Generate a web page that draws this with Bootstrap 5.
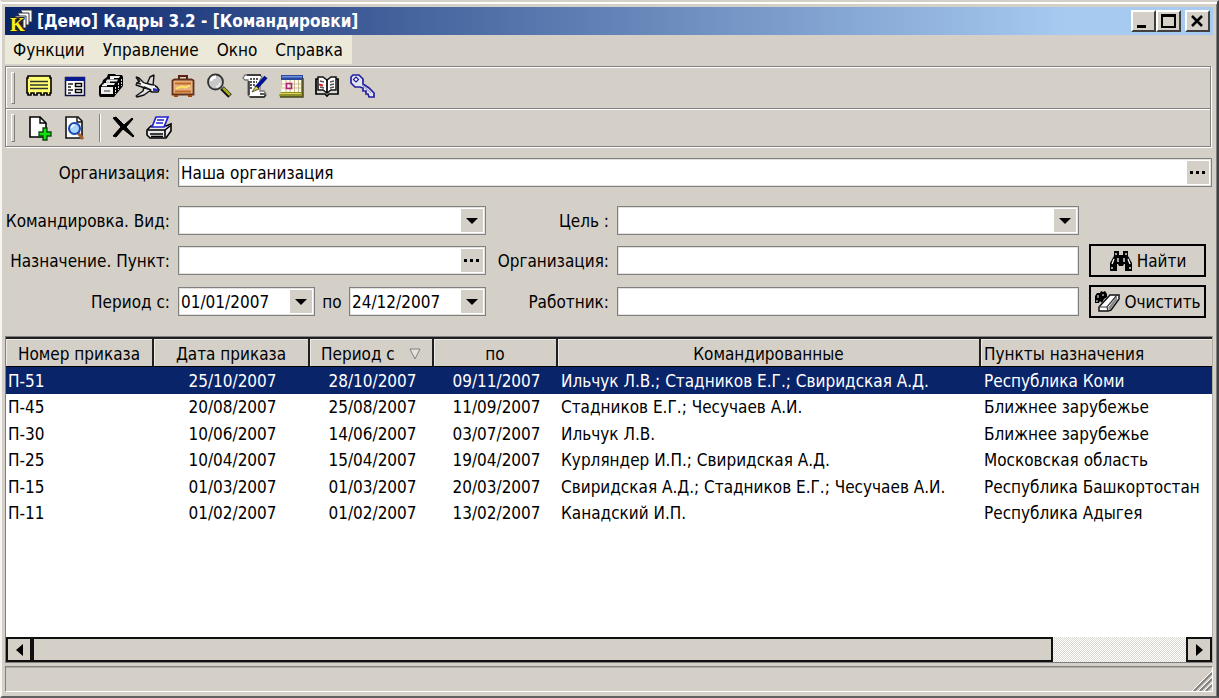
<!DOCTYPE html>
<html lang="ru">
<head>
<meta charset="utf-8">
<meta name="viewport" content="width=device-width, initial-scale=1">
<title>Кадры 3.2 - Командировки</title>
<link href="https://cdn.jsdelivr.net/npm/bootstrap@5.3.0/dist/css/bootstrap.min.css" rel="stylesheet">
<style>
:root { --face: #d4d0c8; --shade: #808080; --navy: #0a246a; }
body { background: var(--face); color: #000; font-family: "DejaVu Sans Condensed", "Noto Sans", sans-serif; font-size: 17px; line-height: 24px; }
button, input, select { font: inherit; color: inherit; border-radius: 0; }
button { background: var(--face); border: 0; padding: 0; }
svg { display: block; flex: none; }
.win { border: 2px solid; border-color: var(--face) #404040 #606060 #f6f5f2; box-shadow: inset 0 2px #fff, inset -1px 0 var(--shade); padding: 5px 4px 4px 3px; }
.titlebar { height: 28px; background: linear-gradient(90deg, var(--navy), #a6caf0 88%); padding: 0 3px 0 4px; }
.titlebar h1 { font-size: 17px; line-height: 24px; font-weight: 700; color: #fff; }
.winbtn { width: 25px; height: 22px; border: 2px solid; border-color: #fff #404040 #404040 #fff; }
.menubar { height: 29px; background: #ece9d8; padding: 0 9px 0 8px; gap: 18px; }
.menubar a { color: #000; text-decoration: none; }
.bars { border: 1px solid var(--shade); box-shadow: 1px 1px #fff, inset 1px 1px #fff; margin: 2px 2px 0 0; }
.toolrow { padding-left: 5px; }
.toolrow.first { height: 42px; border-bottom: 1px solid var(--shade); }
.toolrow.first .tool { margin-bottom: 4px; }
.toolrow.second { height: 37px; box-shadow: inset 0 1px #fff; }
.grip { width: 4px; margin: 5px 6px 4px 0; border: 1px solid; border-color: #fff var(--shade) var(--shade) #fff; align-self: stretch; }
.split { width: 2px; height: 28px; background: #fff; border-left: 1px solid var(--shade); margin: 0 4px 0 6px; }
.tool { width: 36px; height: 32px; display: flex; align-items: center; justify-content: center; }
.filters { display: grid; grid-template-columns: 165px 2fr 115px 3fr 125px; column-gap: 8px; row-gap: 8px; align-items: center; margin-right: 1px; padding: 11px 0 18px; grid-template-rows: 29px 41px 33px 33px; }
.filters > label { text-align: right; white-space: nowrap; }
.orgbox { grid-column: 2 / -1; }
.gaprow { margin-top: 10px; }
.fbox { height: 29px; min-width: 0; background: #fff; border: 1px solid var(--shade); box-shadow: inset 0 0 0 1px #e4e2de; padding: 2px; }
.fbox input { border: 0; background: none; flex: 1; min-width: 0; width: 100%; padding: 0; height: 23px; outline: 0; }
.fbox button { width: 22px; flex: none; display: flex; align-items: center; justify-content: center; }
.datebox { flex: 0 0 137px; }
.combo { appearance: none; width: 100%; height: 29px; border: 1px solid var(--shade); padding: 0 26px 0 2px; box-shadow: inset 0 0 0 1px #e4e2de;
  background: #fff url("data:image/svg+xml,%3Csvg xmlns='http://www.w3.org/2000/svg' width='22' height='23'%3E%3Cpath fill='%23d4d0c8' d='M0 0h22v23H0z'/%3E%3Cpath d='M5 9h12l-6 6z'/%3E%3C/svg%3E") no-repeat right 2px center; }
.cmd { height: 33px; margin: 0 6px 0 2px; border: 2px solid #000; display: flex; align-items: center; justify-content: center; gap: 4px; white-space: nowrap; }
.sheet { background: #fff; border: 1px solid var(--shade); border-right-color: #b0aca4; flex: 1; min-width: 0; }
.orders { table-layout: fixed; width: 100%; border-collapse: separate; border-spacing: 0; }
.orders th { background: var(--face); font-weight: 400; height: 30px; padding: 2px 3px 0; border-top: 2px solid #202020; border-bottom: 1px solid #000; border-right: 2px solid #202020; box-shadow: inset 1px 1px #eceae6; text-align: center; white-space: nowrap; }
.orders th:last-child { border-right: 0; text-align: left; }
.orders td { height: 26px; padding: 0 2px 0 3px; white-space: nowrap; overflow: hidden; }
.orders tr:nth-child(odd) td { height: 27px; }
.orders .dt { text-align: center; }
.orders tr.sel td { background: var(--navy); color: #fff; }
.orders td:first-child { padding-left: 2px; }
.hbar { height: 25px; }
.hbar button, .thumb { border: 2px solid #101010; background: var(--face); height: 25px; }
.hbar button { width: 26px; display: flex; align-items: center; justify-content: center; }
.track { background: repeating-conic-gradient(#fff 0 25%, #dcd9d3 0 50%) 0 0 / 2px 2px; }
.statusbar { height: 26px; margin-top: 3px; border: 1px solid; border-color: var(--shade) #fff #fff var(--shade); box-shadow: inset 0 1px #b0aca4; }
</style>
</head>
<body>
<div class="win d-flex flex-column min-vh-100">
  <header class="titlebar d-flex align-items-center">
    <svg width="24" height="26" viewBox="0 0 24 26"><g fill="#fff" stroke="#333"><path d="M12 2h11v12h-4"/><path d="M9 5h11v12h-4"/><path d="M6 8h11v12H8z"/><path d="M3 10h11v12H3z" fill="#222"/></g><text x="1" y="23" font-family="Liberation Serif" font-weight="700" font-size="19" fill="#ffee20" stroke="#222" stroke-width="2" paint-order="stroke">K</text></svg>
    <h1 class="mb-0 ms-1 flex-grow-1">[Демо] Кадры 3.2 - [Командировки]</h1>
    <button class="winbtn" aria-label="Свернуть"><svg width="21" height="18"><path d="M4 13h9v3H4z"/></svg></button>
    <button class="winbtn" aria-label="Развернуть"><svg width="21" height="18"><path d="M4 3h13v12H4z" fill="none" stroke="#000" stroke-width="2"/><path d="M3 2h15v3H3z"/></svg></button>
    <button class="winbtn ms-1" aria-label="Закрыть"><svg width="21" height="18"><path d="M5 4l10 10M15 4L5 14" stroke="#000" stroke-width="2.5"/></svg></button>
  </header>
  <nav class="menubar d-flex align-items-center align-self-start">
    <a href="#">Функции</a><a href="#">Управление</a><a href="#">Окно</a><a href="#">Справка</a>
  </nav>
  <div class="bars">
    <div class="toolrow first d-flex align-items-center">
      <span class="grip"></span>
      <button class="tool" aria-label="Карточка"><svg width="26" height="26" viewBox="0 0 26 26"><path d="M2 3h22v2h1v15h-1v2h-3v-2h-3v2h-3v-2h-4v2H8v-2H5v2H2v-2H1V5h1z" fill="#ffff70" stroke="#000" stroke-width="1.600"/><path d="M4 8.500h18M4 12h18M4 15.500h18" stroke="#333" stroke-width="1.500"/></svg></button>
      <button class="tool" aria-label="Форма"><svg width="26" height="26" viewBox="0 0 26 26"><path d="M3.500 4.500h19v18h-19z" fill="#fff" stroke="#101040" stroke-width="1.500"/><path d="M3 4h20v4H3z" fill="#0a1a90"/><path d="M6 11h5M6 14h3M6 17h5M6 20h3" stroke="#222" stroke-width="1.500"/><path d="M13.500 10.500h6v3h-6zM13.500 16.500h6v3h-6z" fill="#fff" stroke="#000" stroke-width="1.500"/></svg></button>
      <button class="tool" aria-label="Картотека"><svg width="26" height="26" viewBox="0 0 26 26"><path d="M1 13L4 10l1-3 4-3 1-3h7l1 1h6l1 2v9l-9 11H2L1 22z" fill="#000"/><path d="M3 14h12v7H3zM6 10h11l-1 2H5zM9 6.500h11l-1 2H8zM12 3h10l-1 2h-9z" fill="#eee"/><path d="M17.500 14v7M20.500 10v7M23.500 6v7" stroke="#ddd" stroke-dasharray="2 1"/><path d="M4 12.500h5M8 9h4M12 5.500h4" stroke="#fff" stroke-width="1.500"/><path d="M6 18h6" stroke="#333"/></svg></button>
      <button class="tool" aria-label="Командировки"><svg width="26" height="26" viewBox="0 0 26 26"><g stroke="#111" stroke-width="1.400" stroke-linejoin="bevel"><path d="M13 11l3-7 4-2-1 11z" fill="#ddd"/><path d="M2 4l3 1 5 5 9 2 4 2 2 3-1 2h-6L8 14l-6-2 1-2 2-1z" fill="#f2f2f2"/><path d="M10 14l7 3-7 5-7 2-1-1 7-5z" fill="#e4e4e4"/></g><path d="M2 10l5 1M4 5l2 4M11 15l3 1M19 12l3 1" stroke="#222" stroke-width="1.500"/><path d="M19 15l5 1v2h-5z" fill="#2c2cc8"/><path d="M9 11l6 2M18 13.500h3" stroke="#fff" stroke-width="1.500"/></svg></button>
      <button class="tool" aria-label="Отпуска"><svg width="26" height="26" viewBox="0 0 26 26"><path d="M9 6V3h8v3" fill="none" stroke="#5a2010" stroke-width="2"/><path d="M2.500 7.500l2-1h17l2 1v14h-21z" fill="#e6b080" stroke="#64301a" stroke-width="1.800"/><path d="M5 10.500h16M5 18.500h16" stroke="#c06a28" stroke-width="1.800"/><path d="M6 15.500l6-2 3 1 5-2" stroke="#ffe860" stroke-width="1.800" fill="none"/><path d="M4 22h4v2H4zM18 22h4v2h-4z" fill="#a04808"/></svg></button>
      <button class="tool" aria-label="Поиск"><svg width="26" height="26" viewBox="0 0 26 26"><path d="M16 15l8 8" stroke="#111" stroke-width="5"/><path d="M17 15l7 7" stroke="#a8ac20" stroke-width="2.500"/><circle cx="9.500" cy="9" r="7.500" fill="#c8c8c8" stroke="#333" stroke-width="1.800"/><path d="M5 8a5 5 0 015-4" stroke="#fff" stroke-width="3" fill="none"/><path d="M14 10a5 5 0 01-4 4" stroke="#eee" stroke-width="1.500" fill="none"/></svg></button>
      <button class="tool" aria-label="Приказы"><svg width="26" height="26" viewBox="0 0 26 26"><path d="M3 2h15l2 2-2 3v11h4l2 3-2 3H8l-2-2V7H3L1 5z" fill="#fff" stroke="#777" stroke-width="1.300"/><path d="M5 2h14M8 24h14l2-2M7 8v14M18 21h5" stroke="#222" stroke-width="1.500" fill="none"/><path d="M8 6h8M8 9h7M8 12h6M8 15h3" stroke="#222" stroke-width="1.500" stroke-dasharray="2 1"/><path d="M24 4l-10 11" stroke="#001090" stroke-width="4"/><path d="M14 13l3 3-7 3z" fill="#ded030" stroke="#333" stroke-width=".8"/></svg></button>
      <button class="tool" aria-label="Календарь"><svg width="26" height="26" viewBox="0 0 26 26"><path d="M4 4h20l1 2v18H2l-1-2 2-3z" fill="#90902c"/><path d="M4 7h19v12H3z" fill="#fffbe8"/><path d="M3 2h22v5H3z" fill="#2848a0"/><path d="M4 3h20v1.500H4z" fill="#7090d8"/><path d="M4 11h19M4 15h19M8 7v12M12 7v12M16.500 7v12M20.500 7v12" stroke="#c8b890"/><path d="M8.500 10.500h5v5h-5z" fill="none" stroke="#b0207c" stroke-width="1.600"/><path d="M2 24h23V5" fill="none" stroke="#4a4a20" stroke-width="1.500"/><path d="M2 20.500h21" stroke="#dcd850"/></svg></button>
      <button class="tool" aria-label="Справочник"><svg width="26" height="26" viewBox="0 0 26 26"><path d="M4 6H2v15h9l2 2 2-2h9V6h-2" fill="#ddd" stroke="#000" stroke-width="1.700"/><path d="M4 4h5l4 3 4-3h5v13h-5l-4 3-4-3H4z" fill="#fff" stroke="#111" stroke-width="1.500"/><path d="M13 7v13" stroke="#000" stroke-width="1.700"/><path d="M6 8l4 1M6 14l4 1M16 9l4-1M16 12l4-1M16 15l4-1" stroke="#555" stroke-width="1.300"/><path d="M5 11.500l4 1" stroke="#e02020" stroke-width="2"/></svg></button>
      <button class="tool" aria-label="Пароль"><svg width="26" height="26" viewBox="0 0 26 26"><path d="M3 2h6l4 4v5l6 4 5 5v4h-5l-1-3h-2v-3h-3v-3l-3-1H5L1 10V4z" fill="#e4e4f0" stroke="#2020a0" stroke-width="1.700"/><path d="M6 4l2.500 2.500L6 9 3.500 6.500z" fill="#fff" stroke="#2020a0" stroke-width="1.200"/><path d="M12 12l9 8" stroke="#9090c0"/></svg></button>
    </div>
    <div class="toolrow second d-flex align-items-center">
      <span class="grip"></span>
      <button class="tool" aria-label="Добавить"><svg width="26" height="26" viewBox="0 0 26 26"><path d="M4 2h10l6 6v14H4z" fill="#fff" stroke="#000" stroke-width="1.600"/><path d="M14 2v6h6" fill="none" stroke="#000" stroke-width="1.400"/><path d="M17 13h4v4h4v4h-4v4h-4v-4h-4v-4h4z" fill="#10e010" stroke="#084808" stroke-width="1.300"/></svg></button>
      <button class="tool" aria-label="Просмотр"><svg width="26" height="26" viewBox="0 0 26 26"><path d="M4 2h12l4 4v17H4z" fill="#fff" stroke="#111" stroke-width="1.600"/><path d="M15 2v5h5" fill="none" stroke="#111" stroke-width="1.400"/><path d="M16 18l5 6" stroke="#a86030" stroke-width="3"/><circle cx="12.500" cy="13.500" r="5.500" fill="#a8d4ff" stroke="#1848b0" stroke-width="2"/><path d="M9.500 13a3 3 0 013-3" stroke="#fff" stroke-width="1.500" fill="none"/></svg></button>
      <span class="split"></span>
      <button class="tool" aria-label="Удалить"><svg width="26" height="26" viewBox="0 0 26 26"><path d="M3 3l3-1 8 8 8-7 1 1-7 8 8 9-1 1-10-8-7 8-3-1 8-9z" stroke="#000"/></svg></button>
      <button class="tool" aria-label="Печать"><svg width="26" height="26" viewBox="0 0 26 26"><path d="M5 11h15l5-2v7l-5 7H4l-3-3v-5z" fill="#e8e8e8" stroke="#000" stroke-width="1.600"/><path d="M10 2h12l-4 10H6z" fill="#fff" stroke="#2020d0" stroke-width="1.700"/><path d="M11 5h7M10 8h7" stroke="#2020d0" stroke-width="1.500"/><path d="M2 15h17l5-4M19 15v7M4 19h13M5 21.500h12" fill="none" stroke="#000" stroke-width="1.600"/></svg></button>
    </div>
  </div>

  <form class="filters">
    <label for="org">Организация:</label>
    <div class="fbox orgbox d-flex"><input id="org" value="Наша организация"><button type="button" aria-label="Выбрать организацию"><svg width="16" height="4"><path d="M0 0h3v3H0zM6 0h3v3H6zM12 0h3v3h-3z"/></svg></button></div>

    <label for="kind" class="gaprow">Командировка. Вид:</label>
    <select id="kind" class="combo gaprow"><option></option></select>
    <label for="goal" class="gaprow">Цель :</label>
    <select id="goal" class="combo gaprow"><option></option></select>
    <span></span>

    <label for="place">Назначение. Пункт:</label>
    <div class="fbox d-flex"><input id="place"><button type="button" aria-label="Выбрать пункт"><svg width="16" height="4"><path d="M0 0h3v3H0zM6 0h3v3H6zM12 0h3v3h-3z"/></svg></button></div>
    <label for="dest">Организация:</label>
    <div class="fbox d-flex"><input id="dest"></div>
    <button type="button" class="cmd"><svg width="24" height="22" viewBox="0 0 24 22"><path d="M5 1h5v4h4V1h5v5l4 7v8h-7v-7h-1l-1 2h-4l-1-2H8v7H1v-8l4-7z"/><path d="M7 3v2M17 3v2M5 9l-2 5M9 8v4M15 8v4M19 9l2 5M3 17v2M21 17v2" stroke="#fff" stroke-width="1.300"/></svg>Найти</button>

    <label for="from">Период с:</label>
    <div class="d-flex align-items-center justify-content-between">
      <div class="fbox datebox d-flex"><input id="from" value="01/01/2007"><button type="button" aria-label="Календарь начала"><svg width="12" height="6"><path d="M0 0h12L6 6z"/></svg></button></div>
      <label for="to">по</label>
      <div class="fbox datebox d-flex"><input id="to" value="24/12/2007"><button type="button" aria-label="Календарь конца"><svg width="12" height="6"><path d="M0 0h12L6 6z"/></svg></button></div>
    </div>
    <label for="worker">Работник:</label>
    <div class="fbox d-flex"><input id="worker"></div>
    <button type="button" class="cmd"><svg width="26" height="22" viewBox="0 0 26 22"><path d="M1 5l2-3h3l1-2 2 1 2-1 2 3v3l-3 2-2 4-2-2-1 2H1z"/><path d="M4 4v3M9 3v2M3 9v2" stroke="#fff"/><path d="M16 4h9v4l-8 11-3 1H5v-4z" fill="#fff" stroke="#111" stroke-width="1.500"/><path d="M5 16h8l10-12M13 16l1 4" fill="none" stroke="#333" stroke-width="1.200"/><path d="M14 17l9-12v4l-7 10z" fill="#888"/></svg>Очистить</button>
  </form>

  <main class="sheet d-flex flex-column">
    <div class="flex-grow-1">
      <table class="orders">
        <colgroup><col style="width:148px"><col style="width:156px"><col style="width:124px"><col style="width:124px"><col style="width:423px"><col></colgroup>
        <thead><tr><th>Номер приказа</th><th>Дата приказа</th><th><span class="d-flex justify-content-between align-items-center px-2">Период с <svg width="12" height="12"><path d="M1 1h10L6 11z" fill="#e4e2de" stroke="#808080"/></svg></span></th><th>по</th><th>Командированные</th><th>Пункты назначения</th></tr></thead>
        <tbody>
          <tr class="sel"><td>П-51</td><td class="dt">25/10/2007</td><td class="dt">28/10/2007</td><td class="dt">09/11/2007</td><td>Ильчук Л.В.; Стадников Е.Г.; Свиридская А.Д.</td><td>Республика Коми</td></tr>
          <tr><td>П-45</td><td class="dt">20/08/2007</td><td class="dt">25/08/2007</td><td class="dt">11/09/2007</td><td>Стадников Е.Г.; Чесучаев А.И.</td><td>Ближнее зарубежье</td></tr>
          <tr><td>П-30</td><td class="dt">10/06/2007</td><td class="dt">14/06/2007</td><td class="dt">03/07/2007</td><td>Ильчук Л.В.</td><td>Ближнее зарубежье</td></tr>
          <tr><td>П-25</td><td class="dt">10/04/2007</td><td class="dt">15/04/2007</td><td class="dt">19/04/2007</td><td>Курляндер И.П.; Свиридская А.Д.</td><td>Московская область</td></tr>
          <tr><td>П-15</td><td class="dt">01/03/2007</td><td class="dt">01/03/2007</td><td class="dt">20/03/2007</td><td>Свиридская А.Д.; Стадников Е.Г.; Чесучаев А.И.</td><td>Республика Башкортостан</td></tr>
          <tr><td>П-11</td><td class="dt">01/02/2007</td><td class="dt">01/02/2007</td><td class="dt">13/02/2007</td><td>Канадский И.П.</td><td>Республика Адыгея</td></tr>
        </tbody>
      </table>
    </div>
    <div class="hbar d-flex">
      <button type="button" aria-label="Влево"><svg width="7" height="12"><path d="M7 0v12L0 6z"/></svg></button>
      <div class="track flex-grow-1"><div class="thumb" style="width:88.5%"></div></div>
      <button type="button" aria-label="Вправо"><svg width="7" height="12"><path d="M0 0v12l7-6z"/></svg></button>
    </div>
  </main>
  <footer class="statusbar d-flex justify-content-end align-items-end"><svg width="20" height="20"><path d="M2 20L20 2M8 20L20 8M14 20l6-6" stroke="#808080" stroke-width="2"/><path d="M0 20L20 0M6 20L20 6M12 20l8-8" stroke="#fff"/></svg></footer>
</div>
<script src="https://cdn.jsdelivr.net/npm/bootstrap@5.3.0/dist/js/bootstrap.bundle.min.js"></script>
</body>
</html>
